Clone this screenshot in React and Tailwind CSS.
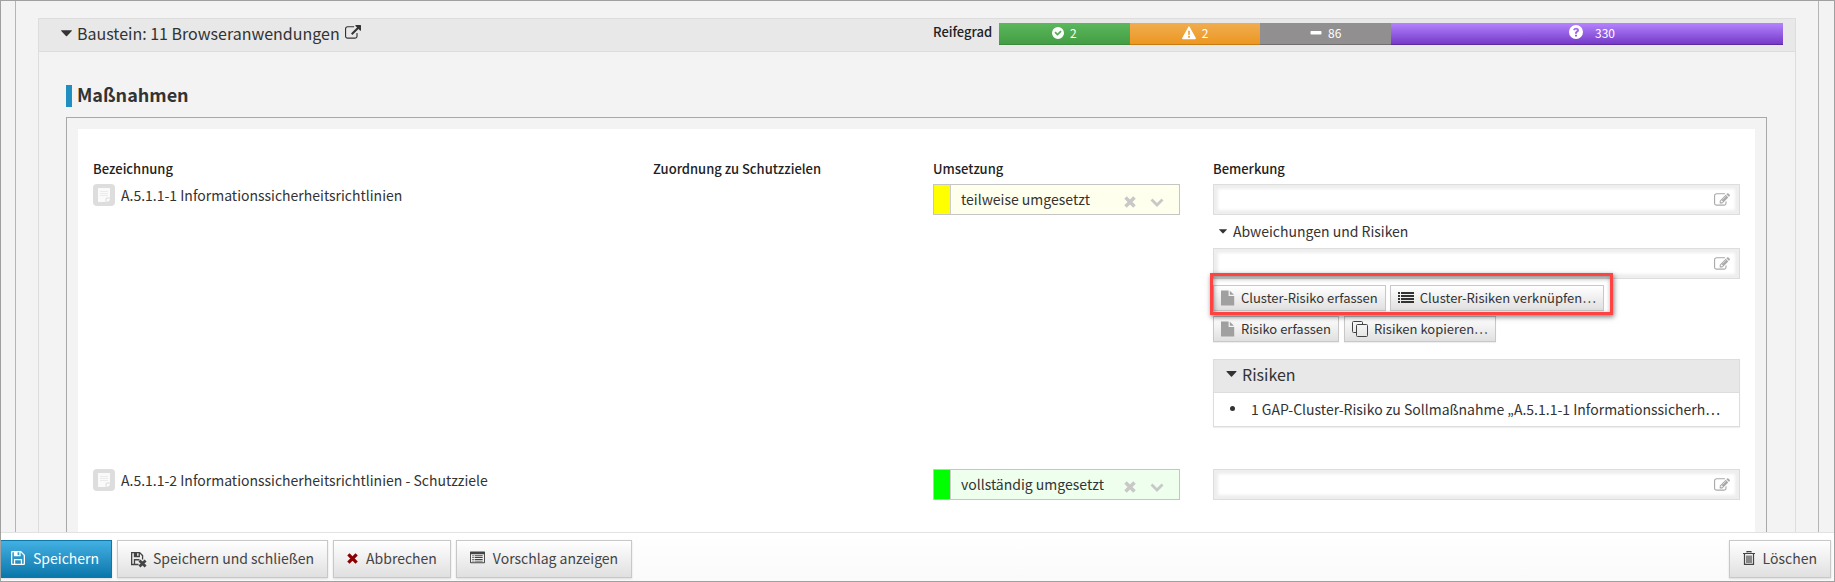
const measures = [
  {
    id: "a1",
    name: "A.5.1.1-1 Informationssicherheitsrichtlinien",
    status: "teilweise umgesetzt",
    swatch: "bg-[#ffff00]",
    tint: "bg-[#ffffee]",
    open: true,
  },
  {
    id: "a2",
    name: "A.5.1.1-2 Informationssicherheitsrichtlinien - Schutzziele",
    status: "vollständig umgesetzt",
    swatch: "bg-[#00ff00]",
    tint: "bg-[#eeffee]",
    open: false,
  },
];

function Svg({ box = "0 0 16 16", className, children }) {
  return (
    <svg viewBox={box} className={`shrink-0 ${className}`} fill="currentColor" aria-hidden="true">
      {children}
    </svg>
  );
}

function Caret({ className }) {
  return (
    <Svg box="0 0 12 7" className={className}>
      <path d="M0.6 0h10.8q.9.2.3.9L6.6 6.3q-.6.6-1.2 0L.3.9Q-.3.2.6 0z" />
    </Svg>
  );
}

function ExternalLinkIcon() {
  return (
    <Svg box="0 0 1792 1792" className="size-4">
      <path d="M1408 928v320q0 119-84.5 203.5t-203.5 84.5h-832q-119 0-203.5-84.5t-84.5-203.5v-832q0-119 84.5-203.5t203.5-84.5h704q14 0 23 9t9 23v64q0 14-9 23t-23 9h-704q-66 0-113 47t-47 113v832q0 66 47 113t113 47h832q66 0 113-47t47-113v-320q0-14 9-23t23-9h64q14 0 23 9t9 23zm384-864v512q0 26-19 45t-45 19-45-19l-176-176-652 652q-10 10-23 10t-23-10l-114-114q-10-10-10-23t10-23l652-652-176-176q-19-19-19-45t19-45 45-19h512q26 0 45 19t19 45z" />
    </Svg>
  );
}

function EditIcon() {
  return (
    <Svg box="0 0 1792 1792" className="size-4 text-[#aaaaaa]">
      <path d="M888 1184l116-116-152-152-116 116v56h96v96h56zm440-720q-16-16-33 1l-350 350q-17 17-1 33t33-1l350-350q17-17 1-33zm80 594v190q0 119-84.5 203.5t-203.5 84.5h-832q-119 0-203.5-84.5t-84.5-203.5v-832q0-119 84.5-203.5t203.5-84.5h832q63 0 117 25 15 7 18 23 3 17-9 29l-49 49q-14 14-32 8-23-6-45-6h-832q-66 0-113 47t-47 113v832q0 66 47 113t113 47h832q66 0 113-47t47-113v-126q0-13 9-22l64-64q15-15 35-7t20 29zm-96-738l288 288-672 672h-288v-288zm444 132l-92 92-288-288 92-92q28-28 68-28t68 28l152 152q28 28 28 68t-28 68z" />
    </Svg>
  );
}

function NoteIcon() {
  return (
    <span className="flex size-[22px] shrink-0 items-center justify-center rounded bg-[#dddddd]">
      <Svg box="0 0 12 14" className="h-3.5 w-3 text-[#fafafa]">
        <path d="M0 0h12v9.500H9q-1.500 0-1.500 1.500V14H0z" />
        <path d="M8.500 14v-2.500q0-1 1-1H12q0 3-3.500 3.500z" />
        <path d="M2 3.500h8M2 5.500h8M2 7.500h8" stroke="#ebebeb" />
      </Svg>
    </span>
  );
}

function FileIcon() {
  return (
    <Svg box="0 0 14 16" className="h-4 w-3.5 text-[#a0a0a0]">
      <path d="M0 .5h7.600v5.400h5.600V15.500H0z" />
      <path d="M8.800.8l4.200 4H8.800z" />
    </Svg>
  );
}

function ListIcon() {
  return (
    <Svg className="size-4 text-[#333333]">
      <path d="M0 2h2v2H0zM3 2h13v2H3zM0 5h2v2H0zM3 5h13v2H3zM0 8h2v2H0zM3 8h13v2H3zM0 11h2v2H0zM3 11h13v2H3z" />
    </Svg>
  );
}

function CopyIcon() {
  return (
    <Svg className="size-4 text-[#444444]">
      <path d="M4 11.500H1.500q-1 0-1-1v-9q0-1 1-1h8q1 0 1 1V3.500" fill="none" stroke="currentColor" />
      <rect x="4.500" y="3.500" width="11" height="12" rx="1" fill="none" stroke="currentColor" />
    </Svg>
  );
}

function SaveIcon() {
  return (
    <Svg className="size-3.5">
      <path
        fillRule="evenodd"
        d="M0 1.500Q0 0 1.500 0h10L16 4.500v10q0 1.500-1.500 1.500h-13Q0 16 0 14.500zM1.500 1.500v13h1.800V9h9.400v5.500h1.800V5L11 1.500V6H3.300V1.500zM7.500 1.500v3h2v-3zM4.800 10.500v4h6.400v-4z"
      />
    </Svg>
  );
}

function SaveCloseIcon() {
  return (
    <Svg box="0 0 17 17" className="mt-1 -mr-0.5 size-4">
      <path
        fillRule="evenodd"
        d="M0 0h9.500L13 3.500V8h-1.400V4.200L9.500 1.900V5.500H3V1.400H1.400v11.200H3V7.500h6V9H4.400v3.600H8V14H0zM6.500 1.400v2.500H8V1.400z"
      />
      <path d="M9 9l6.500 6.500M15.500 9L9 15.500" stroke="currentColor" strokeWidth="3" />
    </Svg>
  );
}

function CrossIcon({ className }) {
  return (
    <Svg box="0 0 12 12" className={className}>
      <path d="M1.500 1.500l9 9M10.500 1.500l-9 9" stroke="currentColor" strokeWidth="3.500" />
    </Svg>
  );
}

function FormIcon() {
  return (
    <Svg className="h-4 w-[15px] text-[#444444]">
      <path
        fillRule="evenodd"
        d="M0 1.500Q0 1 .5 1h15q.5 0 .5.500v11q0 1-1 1H1q-1 0-1-1zM1 4v8.500h14V4z"
      />
      <path d="M2.500 5H4v1H2.500zM5 5h8.500v1H5zM2.500 7H4v1H2.500zM5 7h8.500v1H5zM2.500 9H4v1H2.500zM5 9h8.500v1H5zM2.500 10.800H4v1H2.500zM5 10.800h8.500v1H5z" />
    </Svg>
  );
}

function TrashIcon() {
  return (
    <Svg box="0 0 12 14" className="h-3.5 w-3 text-[#444444]">
      <path
        d="M4 1.500V.6h4v.9M0 2.500h12M1.500 3v10.300h9V3M4 4.500v7.500M6 4.500v7.500M8 4.500v7.500"
        fill="none"
        stroke="currentColor"
        strokeWidth="1.200"
      />
    </Svg>
  );
}

function MaturityBar() {
  return (
    <div className="grid h-[22px] flex-1 grid-cols-6 text-xs leading-[18px] text-white">
      <div className="flex items-center justify-center gap-1.5 border-b border-[#3d8b3d] bg-linear-to-b from-[#5cb85c] to-[#449d44] pb-0.5">
        <Svg className="size-3">
          <path
            fillRule="evenodd"
            d="M8 0a8 8 0 100 16A8 8 0 008 0zM12.800 6.200L7.300 11.700 3.300 7.700l1.600-1.600 2.400 2.400 3.900-3.900z"
          />
        </Svg>
        2
      </div>
      <div className="flex items-center justify-center gap-1.5 border-b border-[#c77c11] bg-linear-to-b from-[#f0ad4e] to-[#ec971f] pb-0.5">
        <Svg className="size-3.5">
          <path
            fillRule="evenodd"
            d="M7.200 1q.8-1.200 1.600 0l7 12.700q.4 1.300-1 1.300H1.200q-1.400 0-1-1.300zM6.900 5.500l.3 4.800h1.600l.3-4.800zM7 11.500v2h2v-2z"
          />
        </Svg>
        2
      </div>
      <div className="flex items-center justify-center gap-1.5 border-b border-[#6f6d6d] bg-[#918f8f] pb-0.5">
        <Svg box="0 0 12 12" className="size-3">
          <rect x="0.500" y="4" width="11" height="3.500" rx="0.800" />
        </Svg>
        86
      </div>
      <div className="col-span-3 flex items-center justify-center gap-3 border-b border-[#5b2a9d] bg-linear-to-b from-[#b583ff] to-[#7638c8] pb-0.5 pl-2.5">
        <Svg className="mb-0.5 size-3.5">
          <path
            fillRule="evenodd"
            d="M8 0a8 8 0 100 16A8 8 0 008 0zM6.900 11v2.200h2.200V11zM4.600 5.500l1.900.9q.6-1.200 1.500-1.200 1 0 1 .8 0 .6-1 1.200-1.100.7-1.100 2v.7h2.200v-.5q0-.5.900-1.100Q11.400 7.300 11.400 5.900 11.400 3 8 3 5.700 3 4.600 5.500z"
          />
        </Svg>
        330
      </div>
    </div>
  );
}

function RemarkInput({ id, label }) {
  return (
    <div className="flex h-[31px] items-center border border-[#dddddd] bg-white pr-[9px] shadow-[inset_0_0_3px_4px_#eeeeee]">
      <input id={id} aria-label={label} type="text" className="h-full min-w-0 flex-1 bg-transparent px-2 outline-none" />
      <button type="button" aria-label="Bearbeiten">
        <EditIcon />
      </button>
    </div>
  );
}

function StatusSelect({ row }) {
  return (
    <div className={`flex h-[31px] items-center border border-[#c5c5c5] ${row.tint}`}>
      <span className={`h-full w-[17px] border-r border-[#cccccc] ${row.swatch}`} />
      <select aria-label="Umsetzung" className="h-full min-w-0 flex-1 appearance-none px-2.5 pb-0.5 outline-none">
        <option>{row.status}</option>
      </select>
      <button type="button" aria-label="Leeren" className="mr-3.5 pt-1 text-[#c8c8c8]">
        <CrossIcon className="size-3" />
      </button>
      <Svg box="0 0 14 10" className="mt-1.5 mr-[15px] h-2.5 w-3.5 text-[#c8c8c8]">
        <path d="M1.500 1.500L7 7l5.500-5.500" fill="none" stroke="currentColor" strokeWidth="2.800" />
      </Svg>
    </div>
  );
}

function SmallButton({ icon, children }) {
  return (
    <button
      type="button"
      className="flex h-[26px] items-center gap-1.5 border border-[#c8c8c8] bg-linear-to-b from-white to-[#e0e0e0] px-[7px] text-[13px] leading-5 whitespace-nowrap shadow-[0_1px_1px_#00000010]"
    >
      {icon}
      {children}
    </button>
  );
}

function ActionButton({ icon, children }) {
  return (
    <button
      type="button"
      className="flex h-[38px] items-center gap-2 border border-[#c8c8c8] bg-linear-to-b from-white to-[#e0e0e0] px-[13px] pb-0.5 whitespace-nowrap text-[#444444] shadow-[0_1px_2px_#00000020]"
    >
      {icon}
      {children}
    </button>
  );
}

function Deviations() {
  return (
    <>
      <button type="button" className="mt-1.5 mb-[7px] flex h-5 items-center gap-1.5 pl-1.5 leading-5">
        <Caret className="h-[5px] w-2" />
        Abweichungen und Risiken
      </button>
      <RemarkInput id="deviation" label="Abweichungen und Risiken" />
      <div className="relative mt-1.5 flex gap-1">
        <SmallButton icon={<FileIcon />}>Cluster-Risiko erfassen</SmallButton>
        <SmallButton icon={<ListIcon />}>Cluster-Risiken verknüpfen…</SmallButton>
        <div className="pointer-events-none absolute -top-3 -left-[3px] h-[42px] w-[403px] border-3 border-[#ff4343] shadow-[1px_2px_5px_#00000080,inset_1px_2px_5px_#00000070]" />
      </div>
      <div className="mt-[5px] flex gap-[5px]">
        <SmallButton icon={<FileIcon />}>Risiko erfassen</SmallButton>
        <SmallButton icon={<CopyIcon />}>Risiken kopieren…</SmallButton>
      </div>
      <section className="mt-[17px] mb-[42px] border border-[#dddddd] shadow-[0_1px_1px_#00000010]">
        <h3 className="flex h-[33px] items-center gap-[5px] border-b border-[#dddddd] bg-[#e8e8e8] pb-1 pl-3 text-base">
          <Caret className="h-1.5 w-[11px]" />
          Risiken
        </h3>
        <ul className="flex h-[33px] items-center pr-5 pb-0.5 pl-4">
          <li className="flex items-center gap-4 whitespace-nowrap">
            <span className="size-[5px] shrink-0 rounded-full bg-[#333333]" />
            1 GAP-Cluster-Risiko zu Sollmaßnahme „A.5.1.1-1 Informationssicherh…
          </li>
        </ul>
      </section>
    </>
  );
}

export default function App() {
  return (
    <div className="flex h-screen flex-col overflow-hidden border border-[#a0a0a0] bg-[#f3f3f3] font-['Noto_Sans_CJK_SC','Source_Sans_Pro',sans-serif] text-sm text-[#333333]">
      <main className="mr-[15px] ml-3.5 min-h-0 flex-1 overflow-hidden border-x border-[#b5b5b5] px-[22px] pt-[17px]">
        <section className="min-h-full border border-[#dddddd]">
          <header className="flex h-[33px] items-center border-b border-[#dddddd] bg-[#e8e8e8] pr-3 pb-0.5 pl-[22px]">
            <h1 className="mr-[11px] flex w-1/2 items-center gap-[5px] pb-0.5 text-base">
              <Caret className="h-[7px] w-[11px]" />
              Baustein: 11 Browseranwendungen
              <a href="#baustein" aria-label="Baustein öffnen">
                <ExternalLinkIcon />
              </a>
            </h1>
            <div className="flex flex-1 items-center">
              <span className="w-[66px] pb-1 text-[13px] font-medium text-[#222222]">Reifegrad</span>
              <MaturityBar />
            </div>
          </header>

          <div className="pt-[33px] pr-7 pl-[27px]">
            <h2 className="mb-2.5 border-l-6 border-[#1f8fc1] pb-1 pl-[5px] text-lg leading-[18px] font-bold">
              Maßnahmen
            </h2>
            <div className="border border-[#a8a8a8] p-[11px]">
              <div className="overflow-hidden bg-white px-[15px] pt-[30px] pb-10">
                <div className="-mr-[33px]">
                  <table className="w-full table-fixed text-left">
                    <thead>
                      <tr className="h-[25px] align-top text-[13px] leading-5 text-[#222222]">
                        <th className="w-1/3 font-medium">Bezeichnung</th>
                        <th className="w-1/6 font-medium">Zuordnung zu Schutzzielen</th>
                        <th className="w-1/6 font-medium">Umsetzung</th>
                        <th className="w-1/3 font-medium">Bemerkung</th>
                      </tr>
                    </thead>
                    <tbody>
                      {measures.map((row) => (
                        <tr key={row.id} className="align-top">
                          <td>
                            <div className="flex items-center gap-1.5 leading-[22px]">
                              <NoteIcon />
                              {row.name}
                            </div>
                          </td>
                          <td />
                          <td className="pr-[33px]">
                            <StatusSelect row={row} />
                          </td>
                          <td className="pr-[33px]">
                            <RemarkInput id={row.id} label="Bemerkung" />
                            {row.open && <Deviations />}
                          </td>
                        </tr>
                      ))}
                    </tbody>
                  </table>
                </div>
              </div>
            </div>
          </div>
        </section>
      </main>

      <footer className="flex shrink-0 items-center gap-[5px] border-t border-[#e2e2e2] bg-linear-to-b from-white to-[#fafafa] pt-[7px] pr-[3px] pb-[3px]">
        <button
          type="button"
          className="flex h-[38px] items-center gap-2 border border-l-0 border-[#0e77a8] bg-linear-to-b from-[#41b0e2] to-[#0777ab] pr-3 pb-0.5 pl-2.5 text-white shadow-[0_1px_2px_#00000020]"
        >
          <SaveIcon />
          Speichern
        </button>
        <ActionButton icon={<SaveCloseIcon />}>Speichern und schließen</ActionButton>
        <ActionButton icon={<CrossIcon className="size-[11px] text-[#8b0000]" />}>Abbrechen</ActionButton>
        <ActionButton icon={<FormIcon />}>Vorschlag anzeigen</ActionButton>
        <div className="ml-auto">
          <ActionButton icon={<TrashIcon />}>Löschen</ActionButton>
        </div>
      </footer>
    </div>
  );
}
